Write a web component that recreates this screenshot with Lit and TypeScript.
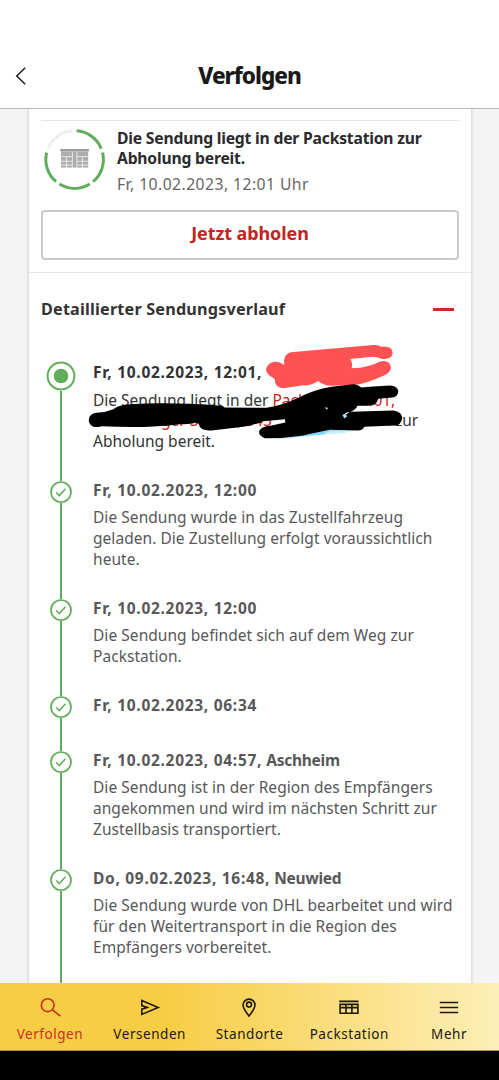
import { LitElement, html, css, svg } from "lit";
import { customElement, property } from "lit/decorators.js";

interface Entry {
  date: string;
  place?: string;
  lines: string[];
  current?: boolean;
}

const ENTRIES: Entry[] = [
  { date: "Fr, 10.02.2023, 12:01,", lines: [], current: true },
  {
    date: "Fr, 10.02.2023, 12:00",
    lines: ["Die Sendung wurde in das Zustellfahrzeug", "geladen. Die Zustellung erfolgt voraussichtlich", "heute."],
  },
  { date: "Fr, 10.02.2023, 12:00", lines: ["Die Sendung befindet sich auf dem Weg zur", "Packstation."] },
  { date: "Fr, 10.02.2023, 06:34", lines: [] },
  {
    date: "Fr, 10.02.2023, 04:57,",
    place: "Aschheim",
    lines: ["Die Sendung ist in der Region des Empfängers", "angekommen und wird im nächsten Schritt zur", "Zustellbasis transportiert."],
  },
  {
    date: "Do, 09.02.2023, 16:48,",
    place: "Neuwied",
    lines: ["Die Sendung wurde von DHL bearbeitet und wird", "für den Weitertransport in die Region des", "Empfängers vorbereitet."],
  },
];

@customElement("status-ring")
export class StatusRing extends LitElement {
  static styles = css`
    :host { display: block; width: 62px; height: 62px; }
    svg { display: block; }
  `;

  private arc(from: number, to: number, color: string) {
    const p = (deg: number) => {
      const a = ((deg - 90) * Math.PI) / 180;
      return `${(30.6 + 28.8 * Math.cos(a)).toFixed(2)} ${(30.6 + 28.8 * Math.sin(a)).toFixed(2)}`;
    };
    return svg`<path d="M${p(from)}A28.8 28.8 0 0 1 ${p(to)}" fill="none" stroke=${color} stroke-width="3"/>`;
  }

  render() {
    return html`<svg width="62" height="62" viewBox="0 0 62 62">
      ${this.arc(4, 68, "#62ad5b")}${this.arc(76, 140, "#62ad5b")}${this.arc(148, 212, "#62ad5b")}
      ${this.arc(220, 284, "#62ad5b")}${this.arc(292, 356, "#eeeeee")}
      <path d="M16.3 20h28.6v2.4H16.3z" fill="#9c9c9c" />
      <path d="M17 22.4h27.2v16.2H17z" fill="#adadad" />
      <path d="M17 27.6h11.2M17 32.3h11.2M17 36h11.2M33 27.6h11.2M33 32.3h11.2M33 36h11.2M22.6 28v11M28.4 23v16M32.9 23v16M38.6 28v11" stroke="#fff" stroke-width=".7" />
    </svg>`;
  }
}

@customElement("history-entry")
export class HistoryEntry extends LitElement {
  @property({ attribute: false }) entry!: Entry;

  static styles = css`
    :host { display: flex; position: relative; }
    .rail { width: 40px; flex: none; display: flex; flex-direction: column; align-items: center; margin-right: 12px; }
    .rail svg { display: block; flex: none; }
    .line { width: 2.4px; flex: 1; background: #62ad5b; }
    .lead { flex: none; height: 2px; }
    .content { padding: 1.2px 0 26.8px; white-space: nowrap; color: #58585a; }
    .title { font-weight: 700; font-size: 15.5px; line-height: 20.8px; margin-bottom: 6.6px; }
    .date { letter-spacing: 0.7px; }
    .place { letter-spacing: -0.25px; }
    .text { font-size: 15.5px; line-height: 20.8px; height: 20.8px; letter-spacing: 0.05px; }
    .current { color: #333; }
    .current .text { letter-spacing: 0; }
    .red { color: #c8201e; }
    .word { display: inline-block; }
    .w1 { width: 101px; }
    .w2 { width: 68px; text-indent: 18px; }
    .w3 { width: 76px; }
    .w4 { width: 144px; }
    .w5 { width: 14px; }
    .scribble { position: absolute; left: 39px; top: -22px; overflow: visible; }
  `;

  render() {
    const { date, place, lines, current } = this.entry;
    return html`
      <div class="rail">
        ${current
          ? html`<svg width="30" height="30" viewBox="0 0 30 30">
              <circle cx="15" cy="15" r="13.4" fill="#fff" stroke="#62ad5b" stroke-width="2" />
              <circle cx="15" cy="15" r="7.3" fill="#62ad5b" />
            </svg>`
          : html`<div class="line lead"></div>
              <svg width="22" height="22" viewBox="0 0 22 22">
                <circle cx="11" cy="11" r="10" fill="#fff" stroke="#62ad5b" stroke-width="1.7" />
                <path d="M6.2 11.4l3.1 3.2 6.2-6.9" fill="none" stroke="#62ad5b" stroke-width="1.5" />
              </svg>`}
        <div class="line"></div>
      </div>
      <div class="content ${current ? "current" : ""}">
        <div class="title"><span class="date">${date}</span>${place ? html` <span class="place">${place}</span>` : ""}</div>
        ${current
          ? html`<div class="text">Die Sendung liegt in der <span class="red"><span class="word w1">Pack</span>01,</span></div>
              <div class="text"><span class="red"><span class="word w2">nn</span><span class="word w3">ger S</span><span class="word w4">, 843</span><span class="word w5">n</span></span>zur</div>
              <div class="text">Abholung bereit.</div>`
          : lines.map((l) => html`<div class="text">${l}</div>`)}
      </div>
      ${current ? this.scribble() : ""}
    `;
  }

  private scribble() {
    return html`<svg class="scribble" width="350" height="130" viewBox="80 340 350 130">
      <g transform="translate(240 336) scale(.33333)">
        <path fill="#ff5252" d="M78 102Q86 79 108 80Q122 81 133 90Q128 53 160 51L400 30Q414 29 424 35Q457 32 458 54Q455 75 425 71Q405 64 390 66L331 72Q339 85 335 100Q388 97 418 80Q449 72 453 98Q451 114 430 122Q385 143 345 150L270 152Q249 151 235 138Q209 154 190 151L130 160Q104 158 104 132Q76 116 78 102Z"/>
      </g>
      <g transform="translate(30 280.8) scale(.33333)">
        <path fill="#82d5fb" d="M765 472L880 452L985 448L940 458L780 474Z"/>
        <path fill="#c8efff" d="M725 470L780 470L780 477L745 478ZM895 455L985 446L940 461L880 463Z"/>
        <path d="M176 422Q176 402 200 399Q228 397 250 388Q262 376 300 373Q420 366 565 377Q581 376 583 383L710 384Q755 378 805 354Q850 330 905 321L970 313Q987 315 994 323L1030 320L1080 317Q1103 319 1105 334Q1103 352 1087 353L1045 357Q1038 378 1020 378L982 378Q979 389 962 396L1090 392Q1116 396 1117 415Q1112 437 1095 437L1003 441Q999 453 980 452L900 450Q853 459 820 467Q760 476 705 475Q687 469 687 456Q690 440 725 437L766 428L765 418L700 424Q675 435 640 441L545 452Q510 455 506 432L496 429Q485 434 450 433Q350 446 215 439Q180 449 176 422Z"/>
        <path fill="#fff" d="M884 383l10 1-3 5zM944 400l14-4-8 8z"/>
        <path fill="#a6e2ff" d="M937 405l10-3 4 8-8 6z"/>
      </g>
    </svg>`;
  }
}

@customElement("app-root")
export class AppRoot extends LitElement {
  static styles = css`
    :host {
      display: flex; flex-direction: column; height: 1080px; width: 100%; overflow: hidden;
      background: #f4f4f4; font-family: "Noto Sans", sans-serif; color: #2b2b2d;
    }
    * { box-sizing: border-box; }
    header {
      height: 109px; flex: none; background: #fff; border-bottom: 1px solid #b9b9b9;
      display: grid; grid-template-columns: 60px 1fr 60px; align-items: center; padding-top: 43px;
    }
    header svg { margin-left: 14px; display: block; }
    h1 { margin: 0; text-align: center; font-size: 22.5px; line-height: 30px; font-weight: 800; letter-spacing: -1px; color: #191919; }
    main { flex: 1; min-height: 0; overflow: hidden; padding: 0 28px 0 29px; display: flex; }
    .card { width: 442px; flex: none; background: #fff; box-shadow: 0 0 3px 1px #0002; height: 900px; }
    .status { margin: 11px 12px 0 12px; border-top: 1px solid #e4e4e4; display: flex; padding: 8px 0 0 3px; height: 90px; }
    .summary { margin-left: 11px; white-space: nowrap; }
    .headline { font-weight: 700; font-size: 15.7px; line-height: 19.5px; letter-spacing: -0.2px; }
    .date { font-size: 15.7px; line-height: 20px; margin-top: 6px; color: #666; letter-spacing: 0.45px; }
    .pickup {
      display: block; margin: 0 12px; width: 418px; height: 50px; background: #fff; border: 2px solid #cacaca;
      border-radius: 4px; color: #c42420; font: 700 18px/40px "Noto Sans", sans-serif; padding: 0 0 5px; letter-spacing: -0.1px;
    }
    .section {
      margin-top: 12px; border-top: 1px solid #e6e6e6; height: 73px; display: flex; justify-content: space-between;
      align-items: center; padding: 0 17.5px 0 12px;
    }
    h2 { margin: 0; font-size: 16.2px; line-height: 22px; font-weight: 700; color: #333; white-space: nowrap; letter-spacing: 0.19px; }
    .minus { width: 21px; height: 3px; background: #c92c24; }
    .history { padding: 16px 0 0 12px; }
    nav {
      height: 68px; flex: none; display: flex; border-bottom: 1px solid #b4983e;
      background: linear-gradient(90deg, #f8cd46 0%, #f8cd46 34%, #fcefb8 100%);
    }
    .tab { flex: 1; display: flex; flex-direction: column; align-items: center; padding-top: 12px; font-size: 13.5px; line-height: 18px; letter-spacing: 0.55px; color: #1c180b; white-space: nowrap; }
    .tab svg { display: block; margin-bottom: 6px; fill: none; stroke: currentColor; stroke-width: 1.6; }
    .active { color: #cb3023; }
    .bottom { height: 29px; flex: none; background: #000; }
  `;

  render() {
    return html`
      <header>
        <svg width="14" height="20" viewBox="0 0 14 20"><path d="M11.2 1.7L2.8 10l8.4 8.3" fill="none" stroke="#222" stroke-width="1.6" /></svg>
        <h1>Verfolgen</h1>
      </header>
      <main>
        <div class="card">
          <div class="status">
            <status-ring></status-ring>
            <div class="summary">
              <div class="headline">Die Sendung liegt in der Packstation zur<br />Abholung bereit.</div>
              <div class="date">Fr, 10.02.2023, 12:01 Uhr</div>
            </div>
          </div>
          <button class="pickup">Jetzt abholen</button>
          <div class="section"><h2>Detaillierter Sendungsverlauf</h2><div class="minus"></div></div>
          <div class="history">${ENTRIES.map((e) => html`<history-entry .entry=${e}></history-entry>`)}</div>
        </div>
      </main>
      <nav>
        <div class="tab active">
          <svg width="24" height="24" viewBox="0 0 24 24"><circle cx="9.7" cy="10.2" r="6.4" /><path d="M14.2 14.9l8.2 6.1" /></svg>Verfolgen
        </div>
        <div class="tab">
          <svg width="24" height="24" viewBox="0 0 24 24"><path d="M3.8 5.4l16.4 7-16.4 7v-5.2l5.4-1.8-5.4-1.8zM3.8 10.6v-5M5.5 12.4h4" /></svg>Versenden
        </div>
        <div class="tab">
          <svg width="24" height="24" viewBox="0 0 24 24"><path d="M12 21C8.4 16.6 6 13.2 6 10.1a6 6 0 0 1 12 0c0 3.1-2.4 6.5-6 10.9z" /><circle cx="12" cy="9.6" r="2.5" /></svg>Standorte
        </div>
        <div class="tab">
          <svg width="24" height="24" viewBox="0 0 24 24"><path d="M2.2 6.4h19.4M3.1 9.4h17.8v8.9H3.1zM3.1 12.6h17.8M9 9.4v9M14.9 9.4v9" /></svg>Packstation
        </div>
        <div class="tab">
          <svg width="24" height="24" viewBox="0 0 24 24"><path d="M2.8 7.5h18.4M2.8 12.5h18.4M2.8 17.5h18.4" stroke-width="1.3" /></svg>Mehr
        </div>
      </nav>
      <div class="bottom"></div>
    `;
  }
}
